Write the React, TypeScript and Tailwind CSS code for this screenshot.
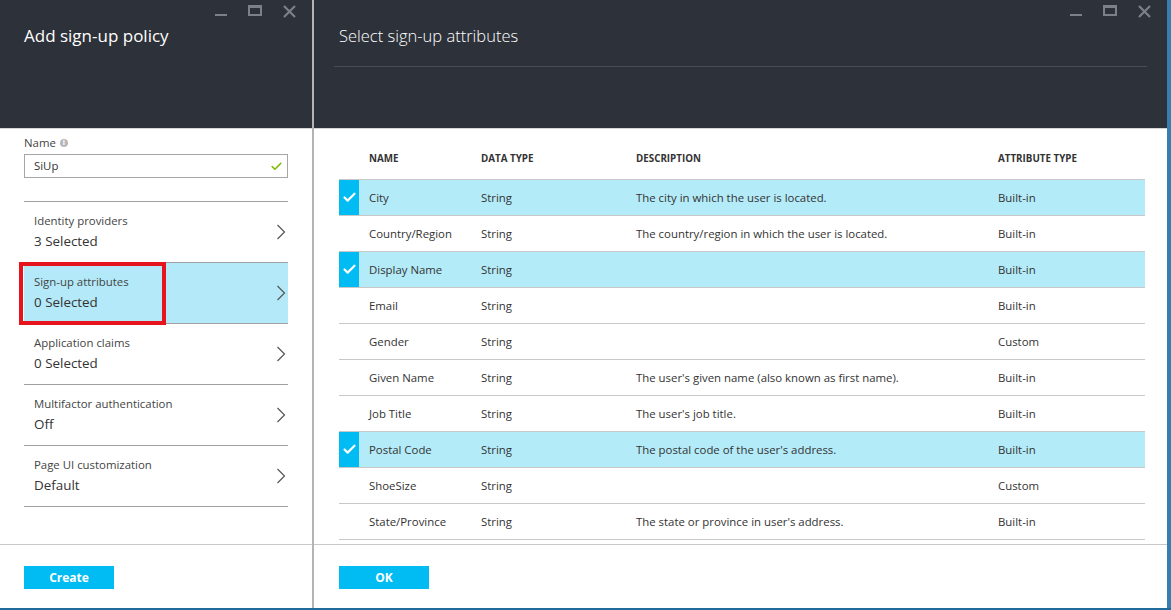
import { Check } from 'lucide-react'

const font = { fontFamily: '"Open Sans", "Noto Sans", sans-serif' }

type Attr = {
  name: string
  type: string
  desc: string
  kind: string
  selected?: boolean
}

const attributes: Attr[] = [
  { name: 'City', type: 'String', desc: 'The city in which the user is located.', kind: 'Built-in', selected: true },
  { name: 'Country/Region', type: 'String', desc: 'The country/region in which the user is located.', kind: 'Built-in' },
  { name: 'Display Name', type: 'String', desc: '', kind: 'Built-in', selected: true },
  { name: 'Email', type: 'String', desc: '', kind: 'Built-in' },
  { name: 'Gender', type: 'String', desc: '', kind: 'Custom' },
  { name: 'Given Name', type: 'String', desc: "The user's given name (also known as first name).", kind: 'Built-in' },
  { name: 'Job Title', type: 'String', desc: "The user's job title.", kind: 'Built-in' },
  { name: 'Postal Code', type: 'String', desc: "The postal code of the user's address.", kind: 'Built-in', selected: true },
  { name: 'ShoeSize', type: 'String', desc: '', kind: 'Custom' },
  { name: 'State/Province', type: 'String', desc: "The state or province in user's address.", kind: 'Built-in' },
]

const items = [
  { label: 'Identity providers', value: '3 Selected' },
  { label: 'Sign-up attributes', value: '0 Selected', active: true },
  { label: 'Application claims', value: '0 Selected' },
  { label: 'Multifactor authentication', value: 'Off' },
  { label: 'Page UI customization', value: 'Default' },
]

function WindowControls() {
  return (
    <div className="flex justify-end h-[24px] pr-[6px]">
      <div className="w-[34px] flex justify-center">
        <div className="w-[12px] h-[2px] bg-[#7c8087] mt-[14px]" />
      </div>
      <div className="w-[34px] flex justify-center">
        <div className="w-[14px] h-[11px] border-2 border-t-[3px] border-[#7c8087] mt-[5px]" />
      </div>
      <div className="w-[34px] flex justify-center">
        <svg width="13" height="13" viewBox="0 0 13 13" className="mt-[5px]">
          <path d="M1 1 L12 12 M12 1 L1 12" stroke="#7c8087" strokeWidth="2.2" />
        </svg>
      </div>
    </div>
  )
}

function Chevron() {
  return (
    <svg width="10" height="16" viewBox="0 0 10 16">
      <polyline points="1.5,1 8.5,8 1.5,15" fill="none" stroke="#555" strokeWidth="1.2" />
    </svg>
  )
}

function BlueButton({ children }: { children: React.ReactNode }) {
  return (
    <button className="w-[90px] h-[23px] bg-[#00bcf2] text-white text-[12px] font-bold leading-[23px] text-center">
      {children}
    </button>
  )
}

function LeftBlade() {
  return (
    <div className="w-[312px] flex flex-col">
      <div className="h-[128px] bg-[#2d3139]">
        <WindowControls />
        <div className="pl-[24px] text-white text-[17px] leading-[24px]">Add sign-up policy</div>
      </div>
      <div className="h-[1px] bg-[#d4d4d4]" />
      <div className="flex-1 px-[24px] pt-[6px] relative">
        <div className="flex items-center gap-[4px] text-[11.4px] leading-[16px] text-[#444]">
          Name
          <span className="w-[8px] h-[8px] rounded-full bg-[#b8b8b8] text-white text-[7px] leading-[8px] text-center font-bold">
            i
          </span>
        </div>
        <div className="mt-[3px] h-[24px] border border-[#a6a6a6] flex items-center justify-between pl-[9px] pr-[4px] text-[11.4px] text-[#333]">
          SiUp
          <Check size={13} strokeWidth={3} color="#7fba00" />
        </div>
        <div className="mt-[23px] border-t border-[#a0a0a0]">
          {items.map((it) => (
            <div
              key={it.label}
              className={`h-[61px] border-b border-[#a0a0a0] flex items-center justify-between pl-[10px] pr-[2px] relative ${
                it.active ? 'bg-[#b3e9f8]' : ''
              }`}
            >
              <div className="flex flex-col">
                <span className="text-[11.4px] leading-[16px] text-[#444]">{it.label}</span>
                <span className="text-[13.4px] leading-[20px] text-[#333] mt-[2px]">{it.value}</span>
              </div>
              <Chevron />
              {it.active && (
                <div className="absolute left-[-5px] top-[-1px] w-[147px] h-[63px] border-4 border-[#e5141d]" />
              )}
            </div>
          ))}
        </div>
      </div>
      <div className="h-[64px] border-t border-[#c8c8c8] pl-[24px] pt-[19px]">
        <BlueButton>Create</BlueButton>
      </div>
    </div>
  )
}

function RightBlade() {
  return (
    <div className="flex-1 flex flex-col">
      <div className="h-[128px] bg-[#2d3139] flex flex-col">
        <WindowControls />
        <div className="pl-[25px] text-white text-[16.5px] leading-[24px] font-light">Select sign-up attributes</div>
        <div className="mx-[20px] mt-[18px] h-[1px] bg-[#484c54]" />
      </div>
      <div className="h-[1px] bg-[#d4d4d4]" />
      <div className="flex-1 pl-[25px] pr-[22px] pt-[23px]">
        <div className="grid grid-cols-[20px_112px_155px_362px_1fr] h-[27px] text-[9.8px] font-bold text-[#333] leading-[14px]">
          <div />
          <div className="pl-[10px]">NAME</div>
          <div className="pl-[10px]">DATA TYPE</div>
          <div className="pl-[10px]">DESCRIPTION</div>
          <div className="pl-[10px]">ATTRIBUTE TYPE</div>
        </div>
        <div className="border-t border-[#c8c8c8]">
          {attributes.map((a) => (
            <div
              key={a.name}
              className={`grid grid-cols-[20px_112px_155px_362px_1fr] h-[36px] border-b border-[#c8c8c8] items-center text-[11.4px] text-[#333] ${
                a.selected ? 'bg-[#b3ebf8]' : ''
              }`}
            >
              <div className={`h-full flex items-center justify-center ${a.selected ? 'bg-[#00bcf2]' : ''}`}>
                {a.selected && <Check size={15} strokeWidth={3.5} color="white" />}
              </div>
              <div className="pl-[10px]">{a.name}</div>
              <div className="pl-[10px]">{a.type}</div>
              <div className="pl-[10px]">{a.desc}</div>
              <div className="pl-[10px]">{a.kind}</div>
            </div>
          ))}
        </div>
      </div>
      <div className="h-[64px] border-t border-[#c8c8c8] pl-[25px] pt-[19px]">
        <BlueButton>OK</BlueButton>
      </div>
    </div>
  )
}

export default function App() {
  return (
    <div className="w-[1171px] h-[610px] bg-white flex flex-col overflow-hidden" style={font}>
      <div className="flex-1 flex">
        <LeftBlade />
        <div className="w-[2px] bg-[#b4b4b4]" />
        <RightBlade />
        <div className="w-[4px] bg-[#347fad]" />
      </div>
      <div className="h-[2px] bg-[#1f6b9c]" />
    </div>
  )
}
